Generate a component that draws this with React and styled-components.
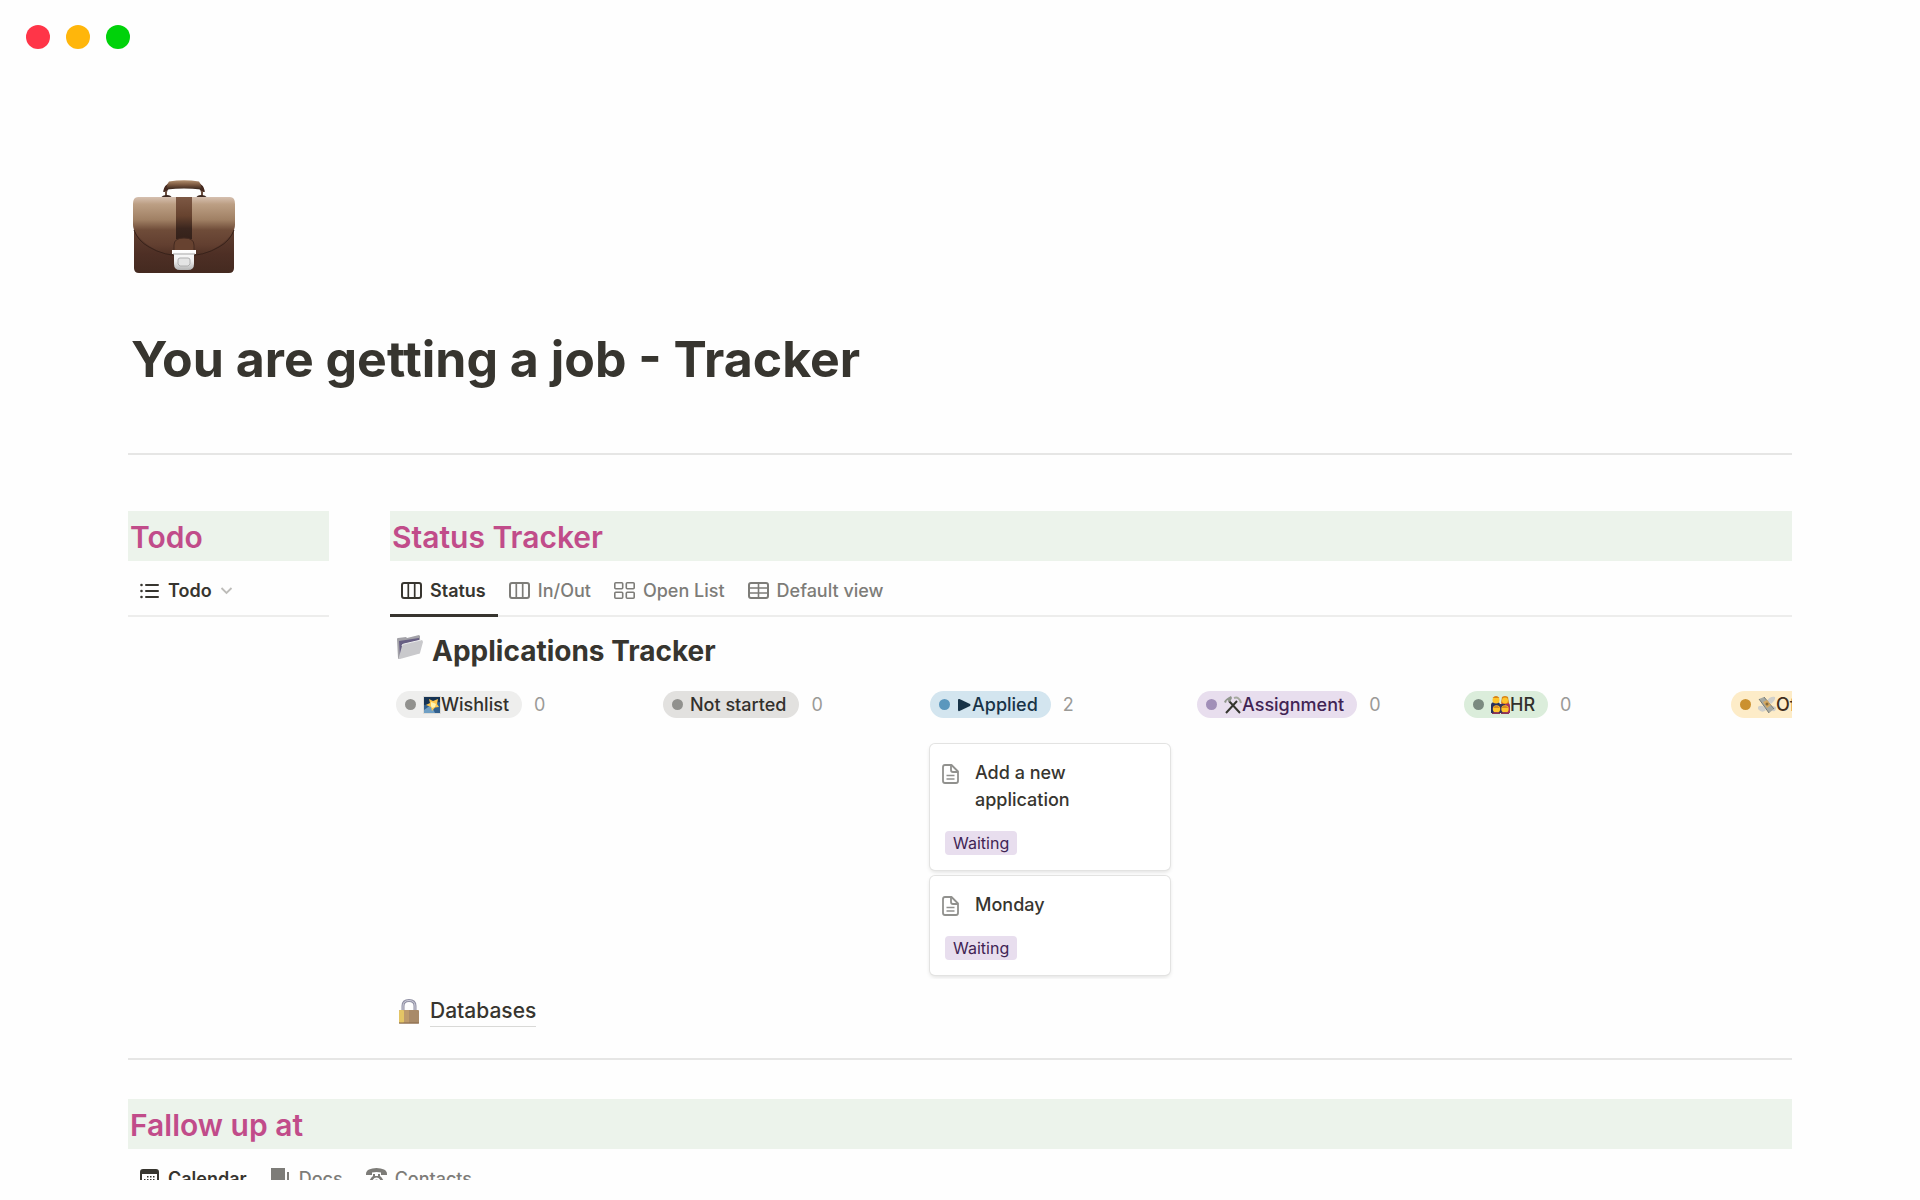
import { useState } from "react"
import styled, { createGlobalStyle } from "styled-components"

const STATUS_TABS = [
    { name: "Status", icon: <BoardIcon /> },
    { name: "In/Out", icon: <BoardIcon /> },
    { name: "Open List", icon: <GalleryIcon /> },
    { name: "Default view", icon: <TableIcon /> }
]

const FOLLOW_TABS = [
    { name: "Calendar", icon: <CalendarIcon /> },
    { name: "Docs", icon: <DocsIcon /> },
    { name: "Contacts", icon: <PhoneIcon /> }
]

const COLUMNS = [
    { name: "Wishlist", icon: <StarIcon />, bg: "#eeeeed", dot: "#91918e", color: "#32302c", cards: [] },
    { name: "Not started", bg: "#e2e1df", dot: "#91918e", color: "#32302c", cards: [] },
    { name: "Applied", icon: <PlayIcon />, bg: "#d3e5ef", dot: "#5b97bd", color: "#183347", cards: ["Add a new application", "Monday"] },
    { name: "Assignment", icon: <HammersIcon />, bg: "#e8deee", dot: "#a18fb8", color: "#412454", cards: [] },
    { name: "HR", icon: <FamilyIcon />, bg: "#dbeddb", dot: "#7b8a80", color: "#32302c", cards: [] },
    { name: "Offer", icon: <MoneyIcon />, bg: "#fdecc8", dot: "#cb912f", color: "#402c1b", cards: [] }
]

export default function App() {
    return (
        <Window>
            <GlobalStyle />
            <WindowBar>
                <WindowDot $color="#ff3548" />
                <WindowDot $color="#ffb60b" />
                <WindowDot $color="#00d20a" />
            </WindowBar>
            <Page>
                <BriefcaseIcon />
                <Title>You are getting a job - Tracker</Title>
                <Divider />
                <Columns>
                    <section>
                        <Band>Todo</Band>
                        <TabBar>
                            <Tab $active>
                                <ListIcon />
                                Todo
                                <ChevronIcon />
                            </Tab>
                        </TabBar>
                    </section>
                    <Main>
                        <Band>Status Tracker</Band>
                        <Tabs tabs={STATUS_TABS} underline />
                        <BoardTitle>
                            <FolderIcon />
                            Applications Tracker
                        </BoardTitle>
                        <Board>
                            {COLUMNS.map((column) => (
                                <Column key={column.name} column={column} />
                            ))}
                        </Board>
                        <PageLink href="#databases">
                            <LockIcon />
                            <span>Databases</span>
                        </PageLink>
                    </Main>
                </Columns>
                <Divider />
                <FollowUp>
                    <Band>Fallow up at</Band>
                    <Tabs tabs={FOLLOW_TABS} />
                </FollowUp>
            </Page>
        </Window>
    )
}

function Tabs({ tabs, underline }) {
    const [selected, setSelected] = useState(tabs[0].name)

    return (
        <TabBar role="tablist">
            {tabs.map((tab) => (
                <Tab
                    key={tab.name}
                    role="tab"
                    aria-selected={selected === tab.name}
                    $active={selected === tab.name}
                    $underline={underline && selected === tab.name}
                    onClick={() => setSelected(tab.name)}
                >
                    {tab.icon}
                    {tab.name}
                </Tab>
            ))}
        </TabBar>
    )
}

function Column({ column }) {
    return (
        <BoardColumn>
            <ColumnHeader>
                <Pill $bg={column.bg} $color={column.color}>
                    <PillDot $color={column.dot} />
                    {column.icon}
                    {column.name}
                </Pill>
                <Count>{column.cards.length}</Count>
            </ColumnHeader>
            {column.cards.map((card) => (
                <Card key={card}>
                    <CardTitle>
                        <PageIcon />
                        <span>{card}</span>
                    </CardTitle>
                    <Tag>Waiting</Tag>
                </Card>
            ))}
        </BoardColumn>
    )
}

function BriefcaseIcon() {
    return (
        <Briefcase viewBox="0 0 104 94" aria-hidden="true">
            <defs>
                <linearGradient id="flap" x1="0" y1="0" x2="0" y2="1">
                    <stop offset="0" stopColor="#d6c0b0" />
                    <stop offset="0.12" stopColor="#bc9f84" />
                    <stop offset="0.38" stopColor="#a08064" />
                    <stop offset="0.55" stopColor="#6f4c39" />
                    <stop offset="0.8" stopColor="#623f30" />
                    <stop offset="1" stopColor="#4c2e23" />
                </linearGradient>
                <linearGradient id="body" x1="0" y1="0" x2="0" y2="1">
                    <stop offset="0" stopColor="#6d4a38" />
                    <stop offset="0.7" stopColor="#4e2f25" />
                    <stop offset="1" stopColor="#442a20" />
                </linearGradient>
                <linearGradient id="strap" x1="0" y1="0" x2="0" y2="1">
                    <stop offset="0" stopColor="#7d5844" />
                    <stop offset="0.45" stopColor="#67432f" />
                    <stop offset="0.75" stopColor="#3b261e" />
                    <stop offset="1" stopColor="#35211a" />
                </linearGradient>
                <linearGradient id="handle" x1="0" y1="0" x2="0" y2="1">
                    <stop offset="0" stopColor="#b4906f" />
                    <stop offset="0.5" stopColor="#7a573f" />
                    <stop offset="1" stopColor="#35231b" />
                </linearGradient>
                <linearGradient id="clasp" x1="0" y1="0" x2="0" y2="1">
                    <stop offset="0" stopColor="#ffffff" />
                    <stop offset="0.55" stopColor="#eeeeee" />
                    <stop offset="1" stopColor="#b5b5b5" />
                </linearGradient>
            </defs>
            <path d="M32 12q1-6 7-8M70 12q-1-6-7-8" fill="none" stroke="#45291f" strokeWidth="4" />
            <path d="M33 11v6M69 11v6" stroke="#6b4f40" strokeWidth="2" />
            <path d="M36 1.500Q51-1 66 1.500Q69 5 68 9.500Q51 7.500 34 9.500Q33 5 36 1.500z" fill="url(#handle)" />
            <path d="M28 18q1-3 6-3 4 0 5 3zM63 18q1-3 5-3 5 0 6 3z" fill="#3c2820" />
            <path d="M1 30h100v58q0 5-5 5H6q-5 0-5-5z" fill="url(#body)" />
            <path d="M5 17h92q5 0 5 7v21q0 9-15 20-17 12-36 12T15 65Q0 54 0 45V24q0-7 5-7z" fill="url(#flap)" />
            <path d="M1 50q4 11 15 17 15 9 35 9t35-9q11-6 15-17" fill="none" stroke="#38221a" strokeWidth="1" />
            <path d="M43 17h16v42H43z" fill="url(#strap)" />
            <path d="M41 76V65q0-7 10-7t10 7v11z" fill="#674230" stroke="#442a20" strokeWidth="1" />
            <path d="M39 70h24v4h-2v10q0 6-6 6h-8q-6 0-6-6V74h-2z" fill="url(#clasp)" />
            <path d="M40 74h22" stroke="#a5a5a5" strokeWidth="1" />
            <path d="M47 78h8q2 0 2 2v4l-2 2h-8l-2-2v-4q0-2 2-2z" fill="#e4e4e4" stroke="#b0b0b0" strokeWidth="1" />
        </Briefcase>
    )
}

function ListIcon() {
    return (
        <svg width="21" height="18" viewBox="0 0 21 18" fill="none" stroke="currentColor" strokeWidth="2" strokeLinecap="round" aria-hidden="true">
            <path d="M7 3h12M7 9h12M7 15h12" />
            <path d="M2.500 3v.01M2.500 9v.01M2.500 15v.01" strokeWidth="2.600" />
        </svg>
    )
}

function ChevronIcon() {
    return (
        <svg width="13" height="8" viewBox="0 0 13 8" fill="none" stroke="#bdbcb9" strokeWidth="1.800" aria-hidden="true">
            <path d="M1.500 1l5 5 5-5" />
        </svg>
    )
}

function BoardIcon() {
    return (
        <svg width="21" height="17" viewBox="0 0 21 17" fill="none" stroke="currentColor" strokeWidth="2" aria-hidden="true">
            <rect x="1" y="1" width="19" height="15" rx="2" />
            <path d="M7.300 1v15M13.700 1v15" strokeWidth="1.700" />
        </svg>
    )
}

function GalleryIcon() {
    return (
        <svg width="21" height="17" viewBox="0 0 21 17" fill="none" stroke="currentColor" strokeWidth="1.600" aria-hidden="true">
            <rect x="0.800" y="0.800" width="7.900" height="6" rx="1" />
            <rect x="12.300" y="0.800" width="7.900" height="6" rx="1" />
            <rect x="0.800" y="10.200" width="7.900" height="6" rx="1" />
            <rect x="12.300" y="10.200" width="7.900" height="6" rx="1" />
        </svg>
    )
}

function TableIcon() {
    return (
        <svg width="21" height="17" viewBox="0 0 21 17" fill="none" stroke="currentColor" strokeWidth="2" aria-hidden="true">
            <rect x="1" y="1" width="19" height="15" rx="2" />
            <path d="M10.500 1v15M1 6h19M1 11h19" strokeWidth="1.600" />
        </svg>
    )
}

function CalendarIcon() {
    return (
        <svg width="21" height="20" viewBox="0 0 21 20" fill="currentColor" aria-hidden="true">
            <path fillRule="evenodd" d="M4 0h13a3 3 0 0 1 3 3v14a3 3 0 0 1-3 3H4a3 3 0 0 1-3-3V3a3 3 0 0 1 3-3zM3 5v12q0 1 1 1h13q1 0 1-1V5z" />
            <path d="M8 7h1.500v1.500H8zM11 7h1.500v1.500H11zM14 7h1.500v1.500H14zM5 10h1.500v1.500H5zM8 10h1.500v1.500H8zM11 10h1.500v1.500H11zM14 10h1.500v1.500H14zM5 13h1.500v1.500H5zM8 13h1.500v1.500H8zM11 13h1.500v1.500H11z" />
        </svg>
    )
}

function DocsIcon() {
    return (
        <svg width="21" height="22" viewBox="0 0 21 22" fill="currentColor" aria-hidden="true">
            <path d="M1 0h14v17H1zM17 4h2v17H6v-2h11z" />
        </svg>
    )
}

function PhoneIcon() {
    return (
        <svg width="21" height="22" viewBox="0 0 21 22" fill="currentColor" aria-hidden="true">
            <path d="M0 6q0-3 3-4.500Q6 0 10.500 0T18 1.500Q21 3 21 6v1h-6V4.500Q13 4 10.500 4T6 4.500V7H0z" />
            <path fillRule="evenodd" d="M7 6h2v2h3V6h2v2q5 4 5 13H2Q2 12 7 8zM10.500 9.500a4 4 0 1 0 .01 0z" />
            <circle cx="10.500" cy="13.500" r="2" />
        </svg>
    )
}

function FolderIcon() {
    return (
        <svg width="26" height="25" viewBox="0 0 26 25" aria-hidden="true">
            <path d="M0 4q0-1 1-1l8-1 1 1 12-3 1 1v8L2 24q-1 0-1-1z" fill="#a3a2a8" />
            <path d="M2 6l20-3v6L3 22z" fill="#675f83" />
            <path d="M5 11q0-2 2-2l17-4q2 0 2 2l-3 11q0 1-2 1L3 24q-2 0-1-2z" fill="#c9c9cc" />
            <path d="M5 11q0-2 2-2l17-4" fill="none" stroke="#eeeeef" strokeWidth="1" />
        </svg>
    )
}

function StarIcon() {
    return (
        <svg width="18" height="18" viewBox="0 0 18 18" aria-hidden="true">
            <rect x="0" y="0" width="18" height="18" fill="#dddcd8" />
            <rect x="1" y="1" width="16" height="16" fill="#315f8d" />
            <path d="M1 1h16v5L1 9z" fill="#173454" />
            <path d="M8 9l-7 5v3h11z" fill="#6f9fc4" />
            <path d="M6 3l4 2 5-2-1 5 2 3-4 .5L9 15l-1-4-5-2 4-2z" fill="#ffc64c" />
            <path d="M8 6l3 1 2 1-1 3-3 1-1-2z" fill="#fff4b0" />
        </svg>
    )
}

function PlayIcon() {
    return (
        <svg width="15" height="14" viewBox="0 0 15 14" fill="currentColor" aria-hidden="true">
            <path d="M1 2q0-1.500 1.500-1L13 6q1.200 1 0 2L2.500 13Q1 13.500 1 12z" />
        </svg>
    )
}

function HammersIcon() {
    return (
        <svg width="18" height="18" viewBox="0 0 18 18" fill="none" aria-hidden="true">
            <path d="M2 17L13 5M16 17L5 5" stroke="#34352e" strokeWidth="2" />
            <path d="M10 2q5-2 7 5" stroke="#a5a99e" strokeWidth="2" />
            <path d="M0 6q1-3 7-6l1 2-2 4-3-2-1 3z" fill="#8f958b" />
        </svg>
    )
}

function FamilyIcon() {
    return (
        <svg width="19" height="18" viewBox="0 0 19 18" aria-hidden="true">
            <path d="M0 9q0-3 4-3h2q3 0 3 3v8H0z" fill="#28305e" />
            <path d="M10 9q0-3 4-3 5 0 5 4v7h-9z" fill="#a4325d" />
            <path d="M9 8h5v9H8z" fill="#343559" />
            <path d="M11 1q3-2 6 0l1 6q-4 2-8 0z" fill="#d88416" />
            <circle cx="5" cy="4" r="3.500" fill="#ffc52b" />
            <circle cx="14" cy="4.500" r="3" fill="#ffc52b" />
            <path d="M1.500 2Q5-2 8.500 2L5 2z" fill="#d88416" />
            <circle cx="5.500" cy="13" r="3.700" fill="#ffc52b" />
            <circle cx="14" cy="13" r="3.700" fill="#ffc52b" />
            <path d="M2 12q3-5 7 0zM10.500 12q3-5 7 0z" fill="#d98a21" />
            <path d="M1 17q4-2 8 0v1H1zM10 17q4-2 8 0v1h-8z" fill="#8d3554" />
        </svg>
    )
}

function MoneyIcon() {
    return (
        <svg width="18" height="18" viewBox="0 0 18 18" aria-hidden="true">
            <path d="M9 5q3-5 8-4 1 3-4 7zM0 13q-1-4 5-3l3 4q-4 4-8-1zM11 9l7 2q0 5-3 4l-5-3z" fill="#cfcfcb" />
            <path d="M1 3l5-2 10 12-5 4z" fill="#a6a9a2" />
            <path d="M6 1l10 12M1 3l10 14" stroke="#777b75" strokeWidth="1" />
            <path d="M5 6l4-2 4 5-4 3z" fill="#d5a961" />
            <circle cx="9" cy="8" r="1.500" fill="#886b3b" />
        </svg>
    )
}

function PageIcon() {
    return (
        <svg width="17" height="20" viewBox="0 0 17 20" fill="none" stroke="#91918e" strokeWidth="1.800" strokeLinejoin="round" aria-hidden="true">
            <path d="M3 1h6.500L16 7.500V17q0 2-2 2H3q-2 0-2-2V3q0-2 2-2z" />
            <path d="M9 1v5q0 2 2 2h5" />
            <path d="M4.500 11.500h8M4.500 15h8" strokeWidth="1.300" />
        </svg>
    )
}

function LockIcon() {
    return (
        <svg width="20" height="25" viewBox="0 0 20 25" fill="none" aria-hidden="true">
            <path d="M4 12V7q0-5.500 6-5.500T16 7v5" stroke="#8f8fa3" strokeWidth="3" />
            <path d="M4 12V7q0-5.500 6-5.500T16 7v5" stroke="#d0d0dc" strokeWidth="1" />
            <rect x="0" y="11" width="20" height="13.500" rx="1" fill="#a98a68" />
            <rect x="0" y="11" width="5" height="13" rx="1" fill="#e4c565" />
            <path d="M5 11h5v13H5z" fill="#bd9a6c" />
            <path d="M0 24h20" stroke="#87694b" strokeWidth="1" />
        </svg>
    )
}

const GlobalStyle = createGlobalStyle`
    * {
        box-sizing: border-box;
    }
    body {
        margin: 0;
        background-color: #fefefe;
        color: #37352f;
        font-family: Inter, "Liberation Sans", sans-serif;
    }
    h1, h2, h3 {
        margin: 0;
    }
    svg {
        flex-shrink: 0;
    }
`
const Window = styled.div`
    display: flex;
    flex-direction: column;
    height: 100vh;
    padding-bottom: 20px;
`
const WindowBar = styled.header`
    display: flex;
    flex-shrink: 0;
    gap: 16px;
    padding: 25px 26px;
`
const WindowDot = styled.span`
    width: 24px;
    height: 24px;
    border-radius: 50%;
    background-color: ${(props) => props.$color};
`
const Page = styled.main`
    flex: 1;
    min-height: 0;
    overflow: hidden;
    padding: 106px 128px 0;
`
const Briefcase = styled.svg`
    display: block;
    width: 104px;
    height: 94px;
    margin-left: 5px;
`
const Title = styled.h1`
    margin: 53px 0 62px;
    padding-left: 3px;
    font-size: 50px;
    line-height: 64px;
    font-weight: 700;
`
const Divider = styled.hr`
    height: 2px;
    margin: 0;
    border: none;
    background-color: #e6e6e5;
`
const Columns = styled.div`
    display: grid;
    grid-template-columns: 201px minmax(0, 1fr);
    gap: 61px;
    margin: 56px 0 31px;
`
const Main = styled.section`
    min-width: 0;
`
const FollowUp = styled.section`
    margin-top: 39px;
`
const Band = styled.h2`
    padding: 2px 2px 0;
    background-color: #ecf3eb;
    color: #c14c8a;
    font-size: 30px;
    line-height: 48px;
    font-weight: 600;
    white-space: nowrap;
`
const TabBar = styled.div`
    display: flex;
    height: 56px;
    border-bottom: 2px solid #ededec;
`
const Tab = styled.button`
    display: flex;
    align-items: center;
    gap: 8px;
    height: 56px;
    padding: 6px 12px 0 11px;
    border: none;
    border-bottom: 3px solid ${(props) => props.$underline ? "#37352f" : "transparent"};
    background: none;
    color: ${(props) => props.$active ? "#37352f" : "#7d7c78"};
    font-family: inherit;
    font-size: 18px;
    font-weight: ${(props) => props.$active ? 600 : 500};
    white-space: nowrap;
    cursor: pointer;
`
const BoardTitle = styled.h3`
    display: flex;
    align-items: center;
    gap: 9px;
    margin: 16px 0 22px;
    padding-left: 7px;
    font-size: 28px;
    line-height: 36px;
    font-weight: 700;
    svg{
        margin-bottom: 8px;
    }
`
const Board = styled.div`
    display: flex;
    gap: 27px;
    padding: 0 0 4px 6px;
    overflow: hidden;
`
const BoardColumn = styled.div`
    display: flex;
    flex-direction: column;
    flex-shrink: 0;
    gap: 6px;
    width: 240px;
`
const ColumnHeader = styled.div`
    display: flex;
    align-items: center;
    gap: 12px;
    margin-bottom: 20px;
`
const Pill = styled.span`
    display: flex;
    align-items: center;
    height: 27px;
    padding: 0 13px 0 9px;
    border-radius: 14px;
    background-color: ${(props) => props.$bg};
    color: ${(props) => props.$color};
    font-size: 18px;
    font-weight: 500;
    white-space: nowrap;
`
const PillDot = styled.span`
    width: 11px;
    height: 11px;
    margin-right: 7px;
    border-radius: 50%;
    background-color: ${(props) => props.$color};
`
const Count = styled.span`
    color: #9b9a97;
    font-size: 18px;
`
const Card = styled.article`
    padding: 15px;
    border-radius: 5px;
    background-color: #fff;
    box-shadow: 0 0 0 1px #e3e3e2, 0 2px 4px #dededd;
`
const CardTitle = styled.div`
    display: flex;
    gap: 16px;
    margin: 0 24px 18px -3px;
    font-size: 18px;
    line-height: 27px;
    font-weight: 500;
    svg{
        margin-top: 5px;
    }
`
const Tag = styled.span`
    display: inline-block;
    padding: 0 8px;
    border-radius: 4px;
    background-color: #e8deee;
    color: #412454;
    font-size: 16px;
    line-height: 24px;
    vertical-align: top;
`
const PageLink = styled.a`
    display: inline-flex;
    align-items: center;
    gap: 11px;
    margin: 17px 0 0 9px;
    color: #37352f;
    font-size: 21px;
    line-height: 30px;
    font-weight: 500;
    text-decoration: none;
    vertical-align: top;
    span{
        border-bottom: 1px solid #d9d9d7;
    }
`
